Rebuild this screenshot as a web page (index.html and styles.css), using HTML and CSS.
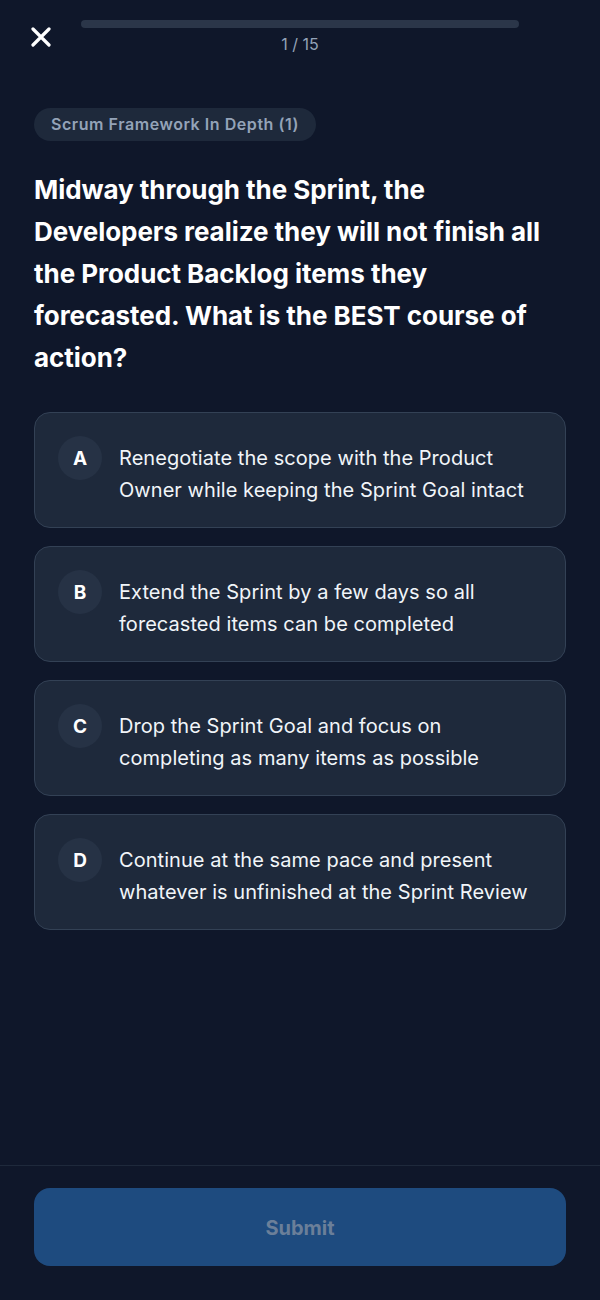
FILE: index.html
```html
<!DOCTYPE html>
<html lang="en">
<head>
<meta charset="utf-8">
<link rel="stylesheet" href="styles.css">
</head>
<body>
<div class="screen">
  <header class="top">
    <button class="close" aria-label="Close">
      <svg width="20" height="20" viewBox="0 0 20 20"><path d="M2 2L18 18M18 2L2 18" stroke="#fff" stroke-width="3.2" stroke-linecap="round"/></svg>
    </button>
    <div class="progress-wrap">
      <div class="progress"><div class="progress-fill" style="width:0%"></div></div>
      <div class="count">1 / 15</div>
    </div>
  </header>
  <main class="content">
    <span class="tag">Scrum Framework In Depth (1)</span>
    <h1 class="question">Midway through the Sprint, the Developers realize they will not finish all the Product Backlog items they forecasted. What is the BEST course of action?</h1>
    <div class="options">
      <div class="option"><span class="letter">A</span><span class="text">Renegotiate the scope with the Product Owner while keeping the Sprint Goal intact</span></div>
      <div class="option"><span class="letter">B</span><span class="text">Extend the Sprint by a few days so all forecasted items can be completed</span></div>
      <div class="option"><span class="letter">C</span><span class="text">Drop the Sprint Goal and focus on completing as many items as possible</span></div>
      <div class="option"><span class="letter">D</span><span class="text">Continue at the same pace and present whatever is unfinished at the Sprint Review</span></div>
    </div>
  </main>
  <footer class="footer">
    <button class="submit">Submit</button>
  </footer>
</div>
</body>
</html>
```
FILE: styles.css
```css
* { box-sizing: border-box; }
html, body { margin: 0; padding: 0; background: #0f172a; }
body { font-family: Inter, "Noto Sans", sans-serif; color: #fff; }
.screen { width: 600px; height: 1300px; display: flex; flex-direction: column; }
.top { display: flex; align-items: flex-start; padding: 20px 34px 0 31px; height: 66px; }
.close { background: none; border: 0; padding: 0; margin-top: 7px; width: 20px; height: 20px; display: flex; }
.progress-wrap { flex: 1; display: flex; flex-direction: column; align-items: center; margin-left: 30px; margin-right: 47px; }
.progress { width: 100%; height: 8px; border-radius: 4px; background: #2b3649; }
.progress-fill { height: 100%; background: #3b82f6; border-radius: 4px; }
.count { margin-top: 6px; font-size: 16px; line-height: 20px; color: #94a3b8; }
.content { flex: 1; padding: 42px 34px 0; display: flex; flex-direction: column; align-items: flex-start; }
.tag { display: inline-block; background: #1e293b; color: #94a3b8; font-size: 16px; font-weight: 600; height: 33px; line-height: 33px; padding: 0 17px; border-radius: 17px; letter-spacing: 0.55px; }
.question { margin: 28px 0 0; font-size: 26px; line-height: 42px; font-weight: 700; color: #fff; letter-spacing: -0.05px; }
.options { width: 100%; display: flex; flex-direction: column; gap: 18px; margin-top: 33px; }
.option { display: flex; align-items: flex-start; gap: 17px; background: #1e293b; border: 1px solid #334155; border-radius: 16px; padding: 23px 24px 21px 23px; min-height: 116px; }
.letter { flex: none; width: 44px; height: 44px; border-radius: 50%; background: #263245; color: #fff; font-weight: 700; font-size: 19px; display: flex; align-items: center; justify-content: center; }
.text { font-size: 20px; line-height: 32px; color: #f1f5f9; padding-top: 6px; letter-spacing: 0.05px; }
.footer { border-top: 1px solid #1e293b; padding: 22px 34px 34px; }
.submit { width: 100%; height: 78px; border: 0; border-radius: 16px; background: #1e4b7f; color: #6b7f99; font-family: Inter, "Noto Sans", sans-serif; font-size: 20px; font-weight: 700; padding-top: 2px; }
```
